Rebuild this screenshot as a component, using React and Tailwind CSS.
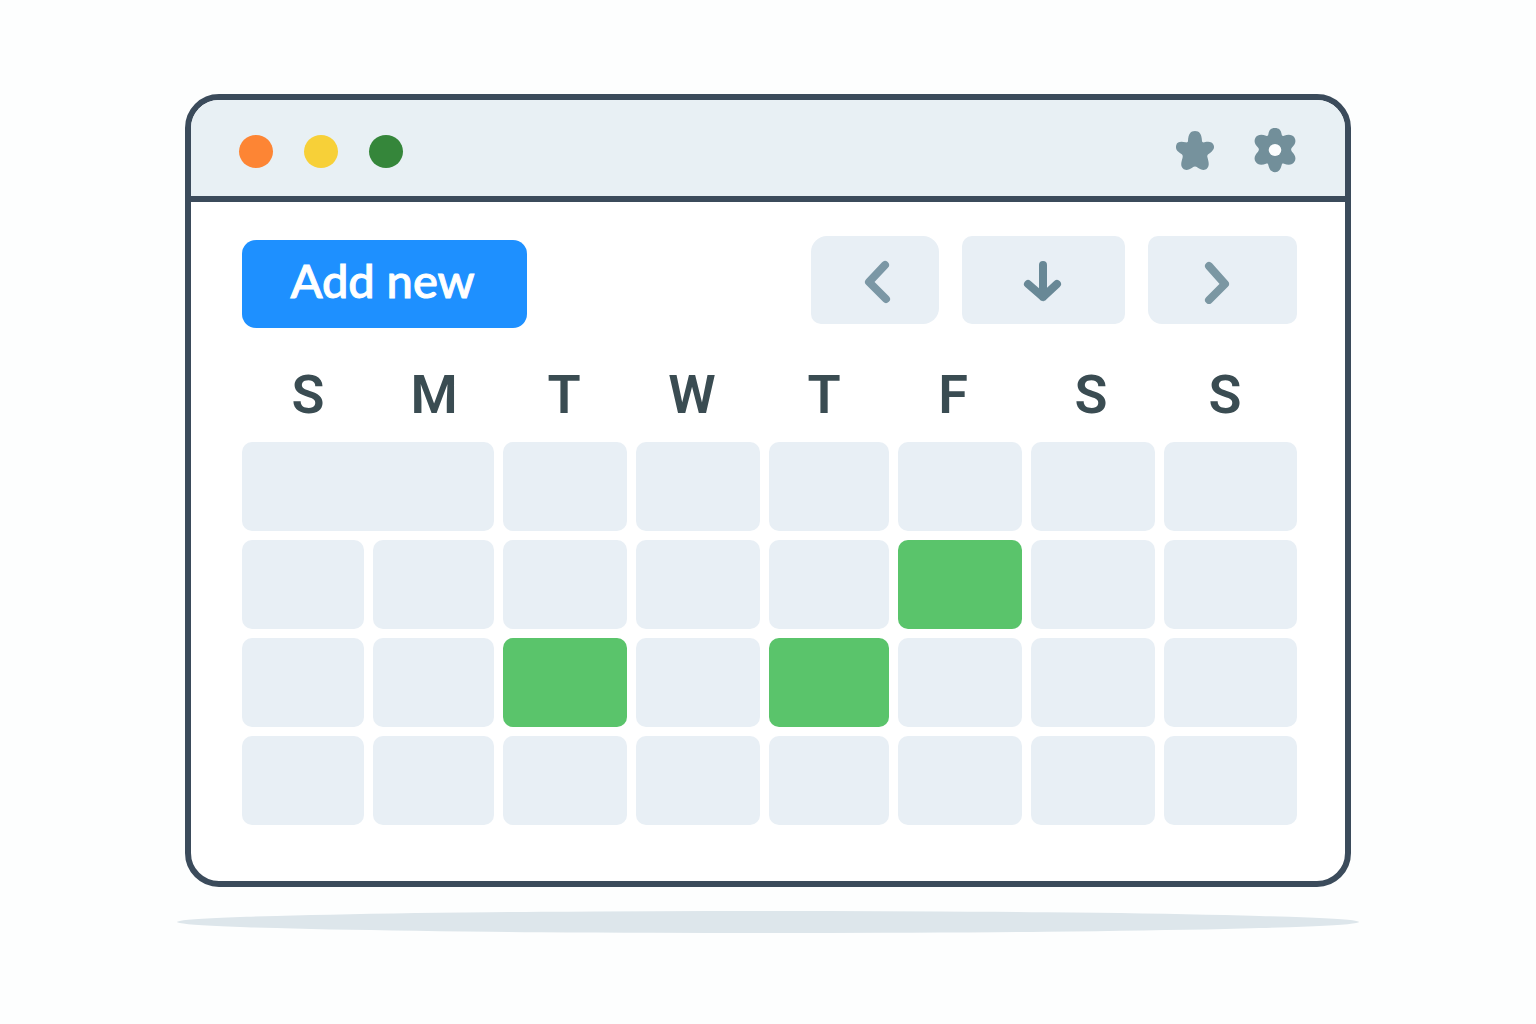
const DAYS = ['S', 'M', 'T', 'W', 'T', 'F', 'S', 'S'];

// One entry per cell, a cell can span several days
const WEEKS = [
  [{ span: 2 }, {}, {}, {}, {}, {}, {}],
  [{}, {}, {}, {}, {}, { booked: true }, {}, {}],
  [{}, {}, { booked: true }, {}, { booked: true }, {}, {}, {}],
  [{}, {}, {}, {}, {}, {}, {}, {}],
];

const StarIcon = () => (
  <svg viewBox="0 0 40 42" className="h-[42px] w-10 fill-[#76929d]" aria-hidden="true">
    <path d="M13 11C13.3 4 15.5 1 20 1S26.7 4 27 11C27.2 12.4 28 12.6 29.5 12.3C34 11.3 37.2 11.8 38.6 15S38 21 34 23.7C32.2 24.8 32 26 32.5 27.5C34 33 34.5 36 32 38.5S26 40 22.5 37.5C21 36.3 19 36.3 17.5 37.5C14 40 10.5 41 8 38.5S6 33 7.5 28C8 26 7.8 24.8 6 23.7C2 21.3 .3 19 1.2 15.3S6 11.3 10.5 12.3C12 12.6 12.8 12.4 13 11Z" />
  </svg>
);

const GearIcon = () => (
  <svg viewBox="0 1 44 46" className="h-[46px] w-11" aria-hidden="true">
    <path
      className="fill-[#728f9a]"
      d="M15.3 7.5C16 3 18 1 22 1S28 3 28.7 7.5C29 9 29.7 9.2 31 8.7C35.5 7 39.5 7.5 41.4 10.6S42.6 17 39 20.4C37.8 21.8 37.8 23.4 39 24.8C42.6 28.5 43.3 31.7 41.4 34.8S35.5 38.4 31 36.7C29.7 36.2 29 36.5 28.7 38C27.5 42.5 25.8 45.2 22 45.2S16.5 42.5 15.3 38C15 36.5 14.3 36.2 13 36.7C8.5 38.4 4.5 37.9 2.6 34.8S1.4 28.5 5 24.8C6.2 23.4 6.2 21.8 5 20.4C1.4 17 .7 13.7 2.6 10.6S8.5 7 13 8.7C14.3 9.2 15 9 15.3 7.5Z"
    />
    <ellipse cx="22" cy="23" rx="6.3" ry="6" className="fill-[#fbfdfe]" />
  </svg>
);

const NavIcon = ({ d, className }) => (
  <svg
    viewBox="0 0 48 48"
    className={`size-12 fill-none ${className}`}
    strokeWidth="8"
    strokeLinecap="round"
    strokeLinejoin="round"
    aria-hidden="true"
  >
    <path d={d} />
  </svg>
);

function TitleBar() {
  return (
    <header className="flex h-[102px] items-center justify-between border-b-[6px] border-[#3b4b5b] bg-[#e8f0f4] px-12 pt-[6px]">
      <div className="flex items-center gap-[31px]">
        <button aria-label="Close" className="h-[33px] w-[34px] rounded-[50%] bg-[#fd8534]" />
        <button aria-label="Minimize" className="h-[33px] w-[34px] rounded-[50%] bg-[#f7d038]" />
        <button aria-label="Maximize" className="h-[33px] w-[34px] rounded-[50%] bg-[#35863a]" />
      </div>
      <div className="flex items-center gap-[38px]">
        <button aria-label="Favorites"><StarIcon /></button>
        <button aria-label="Settings"><GearIcon /></button>
      </div>
    </header>
  );
}

function Toolbar() {
  return (
    <div className="flex items-end justify-between">
      <button className="h-[88px] w-[285px] rounded-[14px] bg-[#1e90ff] pr-1 pb-2 font-['Lato',sans-serif] text-[47px] leading-none font-medium text-white [stroke-linejoin:round] [-webkit-text-stroke:1px_white]">
        Add new
      </button>
      <nav className="flex gap-[23px] pb-1">
        <button aria-label="Previous" className="flex h-[88px] w-[128px] items-center justify-center rounded-2xl rounded-bl-[10px] bg-[#e8eff5]">
          <NavIcon d="M34 9L18 26L35 43" className="stroke-[#7b97a5]" />
        </button>
        <button aria-label="Today" className="flex h-[88px] w-[163px] items-center justify-center rounded-[10px] bg-[#e8eff5]">
          <NavIcon d="M23 9V41M8 28L23 41L37 28" className="stroke-[#688896]" />
        </button>
        <button aria-label="Next" className="flex h-[88px] w-[149px] items-center justify-center rounded-[10px] rounded-bl-[14px] bg-[#e8eff5]">
          <NavIcon d="M10 10L26 28L10 44" className="stroke-[#7b97a3]" />
        </button>
      </nav>
    </div>
  );
}

function Calendar() {
  return (
    <table className="block">
      <thead className="block">
        <tr className="grid h-[114px] grid-cols-[122fr_130fr_130fr_126fr_138fr_120fr_156fr_112fr] items-center pt-5 pr-4 pl-[5px]">
          {DAYS.map((day, i) => (
            <th key={i} scope="col" className="text-center font-['Roboto',sans-serif] text-[54px] leading-none font-semibold text-[#3a4c52]">
              {day}
            </th>
          ))}
        </tr>
      </thead>
      <tbody className="grid gap-[9px]">
        {WEEKS.map((week, w) => (
          <tr key={w} className="grid grid-cols-[122fr_121fr_124fr_124fr_120fr_124fr_124fr_133fr] gap-[9px]">
            {week.map((cell, c) => (
              <td
                key={c}
                colSpan={cell.span}
                className={`h-[89px] rounded-[10px] ${cell.span === 2 ? 'col-span-2' : ''} ${cell.booked ? 'bg-[#5ac46b]' : 'bg-[#e8eff5]'}`}
              />
            ))}
          </tr>
        ))}
      </tbody>
    </table>
  );
}

export default function App() {
  return (
    <main className="min-h-screen bg-[#fdfefe] px-[177px] pt-[94px] pb-16">
      <section className="mx-2 overflow-hidden rounded-[34px] border-[6px] border-[#3b4b5b] bg-white">
        <TitleBar />
        <div className="pt-[34px] pr-12 pb-14 pl-[51px]">
          <Toolbar />
          <Calendar />
        </div>
      </section>
      {/* soft floor under the window */}
      <div className="mt-6 h-[22px] rounded-[50%] bg-[#dde6eb]" />
    </main>
  );
}
